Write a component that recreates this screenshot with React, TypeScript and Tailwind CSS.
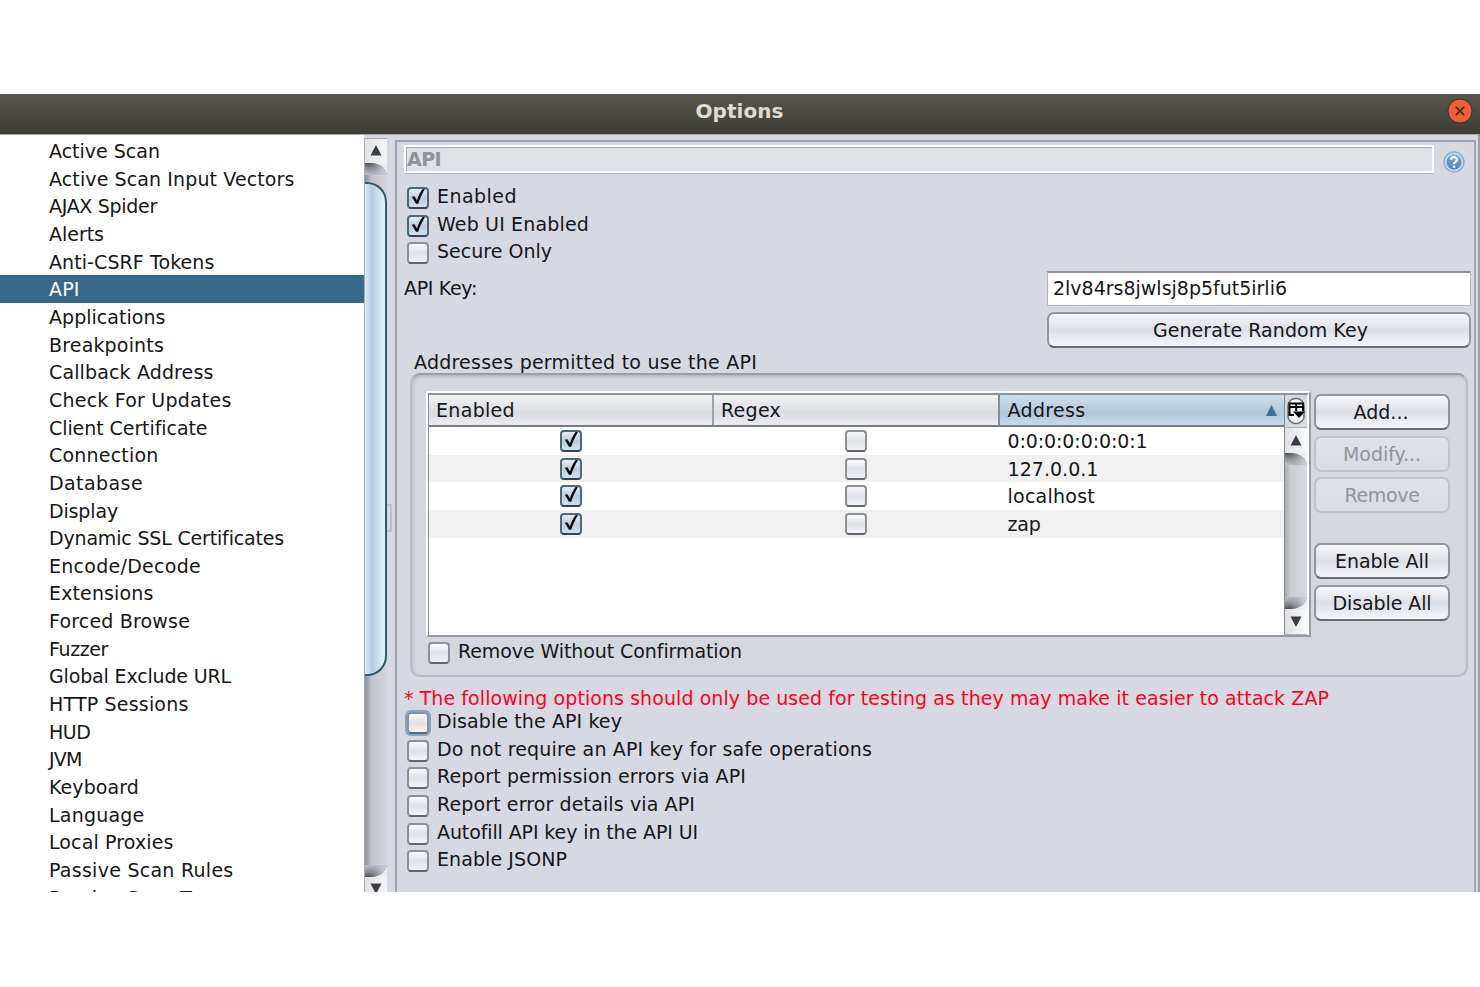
import { useLayoutEffect, useRef, useState } from 'react';
import clsx from 'clsx';

const sections: [string, number][] = [
  ['Active Scan', 111],
  ['Active Scan Input Vectors', 245.5],
  ['AJAX Spider', 108],
  ['Alerts', 55],
  ['Anti-CSRF Tokens', 165.5],
  ['API', 30.5],
  ['Applications', 116.5],
  ['Breakpoints', 115],
  ['Callback Address', 164.5],
  ['Check For Updates', 182.5],
  ['Client Certificate', 158.5],
  ['Connection', 109.5],
  ['Database', 94],
  ['Display', 69],
  ['Dynamic SSL Certificates', 235],
  ['Encode/Decode', 152],
  ['Extensions', 104.5],
  ['Forced Browse', 141],
  ['Fuzzer', 59],
  ['Global Exclude URL', 182],
  ['HTTP Sessions', 139.5],
  ['HUD', 41.5],
  ['JVM', 32.5],
  ['Keyboard', 90],
  ['Language', 95.5],
  ['Local Proxies', 124.5],
  ['Passive Scan Rules', 184.5],
  ['Passive Scan Tags', 174],
];

const addresses: [string, number][] = [
  ['0:0:0:0:0:0:0:1', 140],
  ['127.0.0.1', 91],
  ['localhost', 87.5],
  ['zap', 33],
];

const testingOptions: [string, number][] = [
  ['Disable the API key', 185],
  ['Do not require an API key for safe operations', 435],
  ['Report permission errors via API', 309],
  ['Report error details via API', 258],
  ['Autofill API key in the API UI', 261],
  ['Enable JSONP', 130],
];

// Spreads the letters so that the text takes exactly `w` pixels.
function Text({ children, w, className }: { children: string; w: number; className?: string }) {
  const ref = useRef<HTMLSpanElement>(null);
  const [spacing, setSpacing] = useState(0);

  useLayoutEffect(() => {
    if (!ref.current) return;
    const natural = ref.current.getBoundingClientRect().width;
    setSpacing((w - natural) / children.length);
  }, [children, w]);

  return (
    <span ref={ref} className={clsx('inline-block w-max whitespace-pre', className)} style={{ letterSpacing: `${spacing}px` }}>
      {children}
    </span>
  );
}

function Checkbox({ checked, focused }: { checked?: boolean; focused?: boolean }) {
  return (
    <span
      className={clsx(
        'relative block h-[22px] w-[22px] shrink-0 rounded-[4px] border-2',
        checked
          ? 'border-[#4f6878] border-b-[#2f4656] bg-gradient-to-b from-[#e3edf5] via-[#b9cddd] to-[#cfe2f1]'
          : 'border-[#8d9096] border-b-[#63666c] bg-gradient-to-b from-[#fafafc] via-[#dfe1e8] to-[#f3f4f8]',
        focused && 'shadow-[0_0_0_2px_#7fa6c6]'
      )}
    >
      {checked && (
        <svg viewBox="0 0 22 22" className="absolute -top-[2px] -left-[2px] h-[22px] w-[22px]">
          <path d="M4.8 9.8 L7.4 9.2 L10 13.4 C11.2 9 13.2 5 15.6 2 L18 2 C15 7 12.6 12 11.2 16.8 L9 16.8 Z" fill="#05080c" />
        </svg>
      )}
    </span>
  );
}

function CheckRow({ label, w, checked, focused }: { label: string; w: number; checked?: boolean; focused?: boolean }) {
  return (
    <div className="flex h-[27.7px] items-center">
      <div className="pt-[4px]">
        <Checkbox checked={checked} focused={focused} />
      </div>
      <Text w={w} className="ml-[8px]">
        {label}
      </Text>
    </div>
  );
}

function Button({ label, w, disabled, className }: { label: string; w: number; disabled?: boolean; className?: string }) {
  return (
    <button
      className={clsx(
        'flex items-center justify-center rounded-[7px] border-2',
        disabled
          ? 'border-[#bfc3cb] bg-gradient-to-b from-[#dfe2e7] to-[#d8dbe2] text-[#929498]'
          : 'border-[#92959c] border-b-[#686b72] bg-gradient-to-b from-[#f8f8fa] via-[#dcdfe6] to-[#f5f6fa]',
        className
      )}
    >
      <Text w={w}>{label}</Text>
    </button>
  );
}

function Arrow({ down, className }: { down?: boolean; className?: string }) {
  return (
    <svg viewBox="0 0 12 11" className={clsx('h-[11px] w-[12px]', className)}>
      <path d={down ? 'M0.5 0.5 H11.5 L6 11 Z' : 'M0.5 10.5 H11.5 L6 0 Z'} fill="#3b3d42" />
    </svg>
  );
}

// The shaded curve between a scroll bar's arrow button and its track
function TrackEnd({ bottom }: { bottom?: boolean }) {
  const id = bottom ? 'track-end-bottom' : 'track-end-top';
  return (
    <svg viewBox="0 0 22 12" preserveAspectRatio="none" className={clsx('block h-[12px] w-full shrink-0', bottom && '-scale-y-100')}>
      <defs>
        <linearGradient id={id} gradientUnits="userSpaceOnUse" x1="4" x2="0.5" y1="0" y2="11">
          <stop offset="0" stopColor="#494b50" />
          <stop offset="0.45" stopColor="#85888e" />
          <stop offset="1" stopColor="#bcbfc5" />
        </linearGradient>
        <linearGradient id={`${id}-fade`} x1="0" x2="1" y1="0" y2="0">
          <stop offset="0.15" stopColor="#cbced4" stopOpacity="0" />
          <stop offset="0.9" stopColor="#cbced4" />
        </linearGradient>
      </defs>
      <rect width="22" height="12" fill="#eceef0" />
      <path d="M0 0 H7 C14 0.5 20 4 22 12 H0 Z" fill={`url(#${id})`} />
      <path d="M0 0 H7 C14 0.5 20 4 22 12 H0 Z" fill={`url(#${id}-fade)`} />
    </svg>
  );
}

function Sidebar() {
  return (
    <nav className="flex w-[364px] shrink-0 flex-col overflow-hidden bg-white pt-[2px]">
      {sections.map(([name, w]) => (
        <div
          key={name}
          className={clsx('flex h-[27.65px] shrink-0 items-center pl-[49px]', name === 'API' && 'bg-[#39698a] text-white')}
        >
          <Text w={w} className="relative top-[0.4px]">
            {name}
          </Text>
        </div>
      ))}
    </nav>
  );
}

function SidebarScroll() {
  return (
    <div className="mt-[3px] flex w-[23px] shrink-0 flex-col overflow-hidden border-t border-l border-[#a9acb2] bg-gradient-to-r from-[#8d9096] via-[#c0c3c9] via-30% to-[#d3d6dc]">
      <div className="flex h-[24px] shrink-0 justify-center bg-gradient-to-r from-[#dfe1e4] to-[#f5f6f7] pt-[6px]">
        <Arrow />
      </div>
      <TrackEnd />
      <div className="mt-[7px] h-[494px] shrink-0 rounded-r-[20px] border-2 border-l-0 border-[#38566a] bg-gradient-to-r from-[#dfebf5] via-[#b4cce1] via-35% to-[#e0f7ff]" />
      <div className="h-[189px] shrink-0" />
      <TrackEnd bottom />
      <div className="flex h-[24px] shrink-0 justify-center bg-gradient-to-r from-[#dfe1e4] to-[#f5f6f7] pt-[6px]">
        <Arrow down />
      </div>
    </div>
  );
}

function TableScroll() {
  return (
    <div className="flex w-[23px] shrink-0 flex-col border-l border-[#85888e] bg-[#d6d9df]">
      <div className="flex h-[33px] shrink-0 items-center justify-center border-b border-[#b0b3b9]">
        <svg viewBox="0 0 18 28" className="h-[28px] w-[18px]">
          <rect x="1" y="1.5" width="16" height="25" rx="7.5" fill="#f6f7f9" stroke="#6b6e74" strokeWidth="1.5" />
          <path d="M2.5 6.5 H16 V14 M2.5 5.5 V18 H7 M2.5 10 H16 M9.2 6.5 V14" fill="none" stroke="#000" strokeWidth="2" />
          <path d="M6 14.5 H18 L12 21 Z" fill="#000" />
        </svg>
      </div>
      <div className="flex h-[25px] shrink-0 justify-center bg-gradient-to-r from-[#dfe1e4] to-[#f8f9fa] pt-[7px]">
        <Arrow />
      </div>
      <TrackEnd />
      <div className="flex-1 bg-gradient-to-r from-[#a8abb1] via-[#cbcdd3] via-25% to-[#d5d8dd]" />
      <TrackEnd bottom />
      <div className="flex h-[26px] shrink-0 justify-center border-b border-[#b0b3b9] bg-gradient-to-r from-[#dfe1e4] to-[#f8f9fa] pt-[7px]">
        <Arrow down />
      </div>
    </div>
  );
}

function AddressTable() {
  return (
    <div className="h-[246px] w-[885px] border-2 border-t-white border-r-[#9a9da3] border-b-[#96999f] border-l-white">
      <div className="flex h-full border-t-2 border-r-2 border-l border-t-[#8e9197] border-r-white border-l-[#85888e] bg-white">
        <div className="flex-1">
          <div className="grid h-[32px] grid-cols-[285px_285.5px_1fr] border-b-2 border-[#787b82]">
            <div className="flex items-center border-r-2 border-[#a1a4aa] bg-gradient-to-b from-[#f1f2f4] via-[#d9dce1] via-60% to-[#ebedf2] pl-[7px]">
              <Text w={79}>Enabled</Text>
            </div>
            <div className="flex items-center border-r-2 border-[#7e8d9a] bg-gradient-to-b from-[#f1f2f4] via-[#d9dce1] via-60% to-[#ebedf2] pl-[7px]">
              <Text w={60}>Regex</Text>
            </div>
            <div className="flex items-center justify-between bg-gradient-to-b from-[#d0deea] via-[#b1c7d8] via-60% to-[#c6dbea] pr-[7px] pl-[8px]">
              <Text w={78}>Address</Text>
              <svg viewBox="0 0 11 11" className="h-[11px] w-[11px]">
                <path d="M0 11 H11 L5.5 0 Z" fill="#3d7199" />
              </svg>
            </div>
          </div>
          {addresses.map(([address, w]) => (
            <div key={address} className="grid h-[27.7px] grid-cols-[285px_285.5px_1fr] items-center even:bg-white odd:bg-[#f1f1f1]">
              <div className="flex justify-center pr-[2px]">
                <Checkbox checked />
              </div>
              <div className="flex justify-center pr-[1px]">
                <Checkbox />
              </div>
              <Text w={w} className="ml-[8px]">
                {address}
              </Text>
            </div>
          ))}
        </div>
        <TableScroll />
      </div>
    </div>
  );
}

function ApiPanel() {
  return (
    <main className="mt-[5px] ml-[8px] flex w-[1081px] shrink-0 flex-col border-t-2 border-r-2 border-l-2 border-[#a0a4ae] pl-[7px]">
      <div className="flex h-[45px] pt-[3px]">
        <div className="h-[29px] w-[1030px] border-b border-[#b2b5bb]">
          <div className="h-[28px] border-2 border-white">
            <div className="flex h-full items-center border-t border-l border-[#a7a9ae] bg-[#dee1e6] pb-[2px] font-bold text-[#909399]">
              <Text w={34}>API</Text>
            </div>
          </div>
        </div>
        <svg viewBox="0 0 22 22" className="mt-[6px] ml-[9px] h-[22px] w-[22px]">
          <defs>
            <linearGradient id="help" x1="0" x2="0" y1="0" y2="1">
              <stop offset="0" stopColor="#7aa9d2" />
              <stop offset="1" stopColor="#4c83b5" />
            </linearGradient>
          </defs>
          <circle cx="11" cy="11" r="10" fill="#c6dbee" stroke="#8cb0d3" strokeWidth="1.5" />
          <circle cx="11" cy="11" r="7.5" fill="url(#help)" />
          <path d="M8 8.8 C8 5.2 14 5.2 14 8.7 C14 11 11 10.8 11 13" fill="none" stroke="#fff" strokeWidth="2.3" />
          <circle cx="11" cy="15.7" r="1.4" fill="#fff" />
        </svg>
      </div>

      <div className="-mt-[5px] pl-[3px]">
        <CheckRow label="Enabled" w={80} checked />
        <CheckRow label="Web UI Enabled" w={152} checked />
        <CheckRow label="Secure Only" w={115} />
      </div>

      <div className="mt-[6px] flex justify-between pr-[3px]">
        <Text w={73} className="mt-[6px]">
          API Key:
        </Text>
        <div className="w-[424px]">
          <div className="flex h-[35px] items-center border border-t-2 border-[#b6b8bd] border-t-[#8e9197] bg-white pb-[2px] pl-[5px]">
            <Text w={234}>2lv84rs8jwlsj8p5fut5irli6</Text>
          </div>
          <Button label="Generate Random Key" w={215} className="mt-[6px] h-[36px] w-full pl-[3px]" />
        </div>
      </div>

      <Text w={343} className="mt-[3px] ml-[10px]">
        Addresses permitted to use the API
      </Text>
      <div className="ml-[6px] h-[304px] w-[1058px] rounded-[10px] border-2 border-[#b9bcc4] border-t-[#9a9da5] bg-[#d4d7dd] shadow-[inset_1px_2px_3px_#b5b8bf]">
        <div className="flex pt-[16px] pl-[14px]">
          <AddressTable />
          <div className="ml-[3px] flex flex-col pt-[3px]">
            <Button label="Add..." w={55} className="h-[36px] w-[136px] pr-[2px]" />
            <Button label="Modify..." w={78} disabled className="mt-[6px] h-[36px] w-[136px]" />
            <Button label="Remove" w={75} disabled className="mt-[5px] h-[36px] w-[136px]" />
            <Button label="Enable All" w={94} className="mt-[30px] h-[36px] w-[136px]" />
            <Button label="Disable All" w={99} className="mt-[6px] h-[36px] w-[136px]" />
          </div>
        </div>
        <div className="pl-[16px]">
          <CheckRow label="Remove Without Confirmation" w={284} />
        </div>
      </div>

      <Text w={925} className="mt-[10px] text-[#ff0022]">
        * The following options should only be used for testing as they may make it easier to attack ZAP
      </Text>
      <div className="-mt-[2px] pl-[3px]">
        {testingOptions.map(([label, w], i) => (
          <CheckRow key={label} label={label} w={w} focused={i === 0} />
        ))}
      </div>
    </main>
  );
}

export default function App() {
  return (
    <div className="h-[987px] w-[1480px] overflow-hidden bg-white pt-[94px] font-['DejaVu_Sans',sans-serif] text-[19px] leading-[22px] text-[#161618]">
      <div className="flex h-[798px] flex-col overflow-hidden">
        <header className="flex h-[40px] shrink-0 items-center bg-gradient-to-b from-[#59564f] to-[#3e3d38]">
          <div className="flex-1" />
          <Text w={88} className="relative -top-[3px] left-[3px] text-[20px] font-bold text-[#dfdbd2]">
            Options
          </Text>
          <div className="flex flex-1 justify-end pr-[7px] pb-[6px]">
            <svg viewBox="0 0 26 26" className="h-[26px] w-[26px]">
              <circle cx="13" cy="13" r="12" fill="#ee5f38" stroke="#3a302a" strokeWidth="1" />
              <path d="M8.8 8.8 L17.2 17.2 M17.2 8.8 L8.8 17.2" stroke="#4c2a1b" strokeWidth="1.8" />
            </svg>
          </div>
        </header>
        <div className="flex min-h-0 flex-1 border-t border-[#a5a5a5] bg-[#d6d9e1]">
          <Sidebar />
          <SidebarScroll />
          {/* grip of the split pane */}
          <div className="mt-[369px] -mr-[5px] h-[28px] w-[5px] border-2 border-l-0 border-[#bfc2ca]" />
          <ApiPanel />
          <div className="ml-[2px] flex-1 bg-[#9a9da4]" />
        </div>
      </div>
    </div>
  );
}
